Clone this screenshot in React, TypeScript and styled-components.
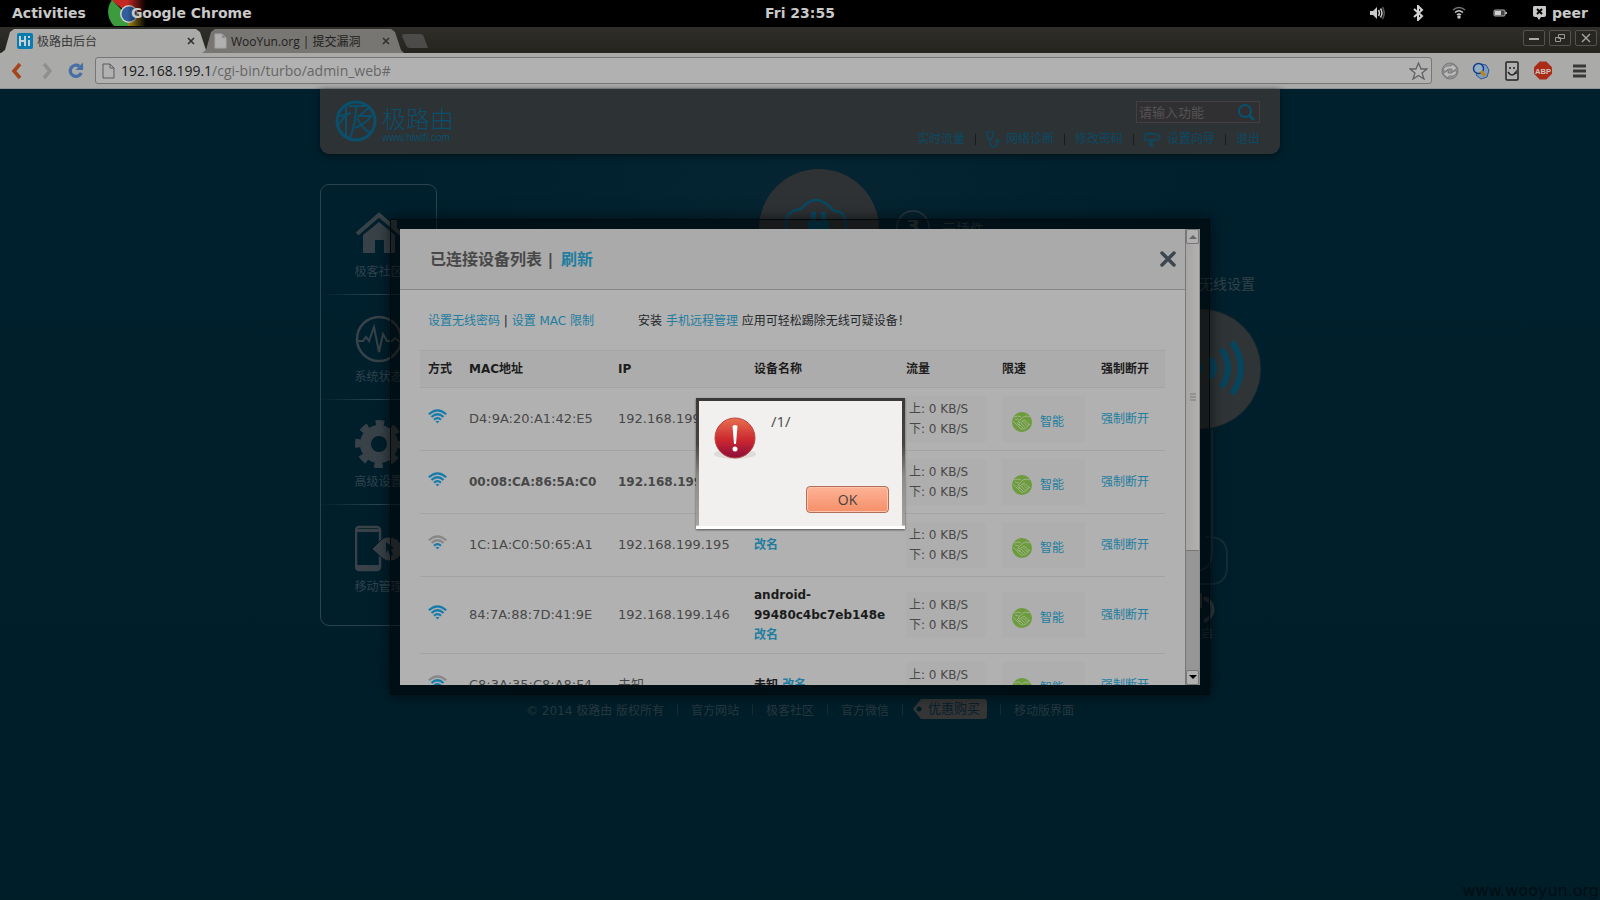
import React from "react";
import styled, { createGlobalStyle } from "styled-components";

const Global = createGlobalStyle`
  *{box-sizing:border-box}
  body{margin:0;background:#001e28;font-family:"DejaVu Sans","Noto Sans CJK SC",sans-serif;font-size:12px;color:#24272a}
  button,input{font-family:inherit;font-size:inherit}
  button{cursor:pointer}
  a{text-decoration:none}
`;
const Screen = styled.div`min-height:100vh;display:flex;flex-direction:column;overflow:hidden;`;
const Panel = styled.header`
  height:27px;background:#000;color:#c9c9c8;display:flex;align-items:center;justify-content:space-between;
  font:bold 14px/26px "DejaVu Sans",sans-serif;padding:0 12px 2px;
`;
const PanelSide = styled.div<{ $end?: boolean }>`flex:1;display:flex;align-items:center;justify-content:${p => (p.$end ? "flex-end" : "flex-start")};`;
const PanelButton = styled.button`border:0;background:none;color:inherit;padding:0;font-weight:bold;font-size:14px;line-height:26px;`;
const AppMenu = styled(PanelButton)`display:flex;margin-left:22px;& span{margin-left:-15px;z-index:1}`;
const StatusIcons = styled.div`display:flex;align-items:center;gap:26px;margin-right:25px;`;
const Peer = styled(PanelButton)`display:flex;align-items:center;gap:5px;`;

const TabStrip = styled.div`height:26px;background:linear-gradient(#302e29,#26241f);display:flex;align-items:flex-end;justify-content:space-between;padding-right:3px;`;
const Tabs = styled.div`display:flex;align-items:flex-end;`;
const TabShape = styled.div<{ $active?: boolean }>`
  width:${p => (p.$active ? 208 : 202)}px;height:24px;margin-left:${p => (p.$active ? 1 : -7)}px;
  padding:0 10px 0 ${p => (p.$active ? 16 : 12)}px;display:flex;align-items:center;
  background:${p => (p.$active ? "#aaaaa8" : "#787673")};
  clip-path:polygon(0 100%,4px 88%,9px 12%,13px 0,calc(100% - 13px) 0,calc(100% - 9px) 12%,calc(100% - 3px) 88%,100% 100%);
  color:${p => (p.$active ? "#393939" : "#202020")};
  & span{flex:1;margin-left:4px;white-space:nowrap;font-family:"Open Sans","Noto Sans CJK SC",sans-serif}
`;
const TabClose = styled.button`border:0;background:none;padding:0;width:12px;height:12px;margin-right:2px;display:flex;align-items:center;justify-content:center;color:#30302f;`;
const NewTab = styled.button`border:0;background:none;width:26px;height:14px;margin:0 0 5px -2px;padding:0;display:flex;`;
const WinButtons = styled.div`display:flex;gap:4px;align-self:flex-start;padding-top:3px;`;
const WinButton = styled.button`width:22px;height:16px;border:1px solid #55534e;border-radius:2px;background:#282621;color:#aaa;padding:0;display:flex;align-items:center;justify-content:center;`;
const Toolbar = styled.div`height:36px;background:#aaaaa8;border-bottom:1px solid #8e9394;display:flex;align-items:center;padding:0 12px 0 8px;`;
const NavButton = styled.button`border:0;background:none;padding:0;width:16px;height:20px;display:flex;align-items:center;justify-content:center;margin-right:14px;`;
const AddressBox = styled.div`flex:1;height:27px;border:1px solid #767674;border-radius:3px;background:#b1b1b1;display:flex;align-items:center;padding:0 3px 0 6px;margin-left:-3px;gap:6px;`;
const Address = styled.div`flex:1;font:14px/24px "Open Sans",sans-serif;color:#666;& b{font-weight:400;color:#1c1c1c}`;
const Extensions = styled.div`display:flex;align-items:center;gap:13px;margin-left:9px;& button{margin:0;width:18px}& button:last-child{margin-left:5px}`;

const Page = styled.main`flex:1;position:relative;background:radial-gradient(ellipse 420px 200px at 50% 110px,#062431,#00202e00),linear-gradient(#00202e,#001e28);`;
const Site = styled.div`max-width:960px;margin:0 auto;`;
const SiteHeader = styled.header`
  height:65px;background:#2d3235;border-radius:0 0 9px 9px;box-shadow:0 2px 6px #00141c;
  display:flex;justify-content:space-between;padding:11px 20px 0 15px;
`;
const Brand = styled.a`display:flex;gap:5px;color:#0a4f6b;height:42px;`;
const BrandText = styled.div`display:flex;flex-direction:column;font:24px/28px "Noto Sans CJK SC",sans-serif;font-weight:300;padding-top:4px;& small{font:10px/12px "Liberation Sans",sans-serif}`;
const HeaderRight = styled.div`display:flex;flex-direction:column;align-items:flex-end;gap:8px;`;
const SearchBox = styled.label`
  width:124px;height:22px;margin-top:1px;border:1px solid #453e3e;background:#302f31;display:flex;align-items:center;padding:0 3px 0 2px;
  & input{width:98px;border:0;background:none;padding:0;outline:0;font-size:13px}
  & input::placeholder{color:#565353;opacity:1}
`;
const Links = styled.nav`display:flex;align-items:center;gap:10px;height:16px;line-height:16px;& i{width:1px;height:11px;background:#171c1f}`;
const HeadLink = styled.a`color:#0b4a63;display:flex;align-items:center;gap:6px;white-space:nowrap;`;
const Body = styled.div`display:flex;justify-content:space-between;align-items:flex-start;padding-top:30px;`;
const Sidebar = styled.nav`width:117px;height:442px;border:1px solid #2b434e;border-radius:9px;padding-top:5px;`;
const SideItem = styled.a`
  display:flex;flex-direction:column;align-items:center;height:105px;padding-top:19px;gap:4px;color:#31434d;
  border-bottom:1px solid;border-image:linear-gradient(90deg,transparent,#2b4652 50%,transparent) 1;
  &:last-child{border:0}
  & span{line-height:18px}
`;
const SideIcon = styled.svg`width:48px;height:50px;`;
const Map = styled.svg`width:520px;height:490px;margin:-18px 14px 0 0;`;
const Footer = styled.footer`
  display:flex;justify-content:center;align-items:center;margin-top:42px;height:22px;color:#29383f;gap:13px;white-space:nowrap;
  & a{color:inherit}& i{width:1px;height:11px;background:#1a2b33}
`;
const Buy = styled.a`
  background:radial-gradient(circle at 6px 10px,#001e28 2px,#363637 3px);&&{color:#08212b}
  font-size:13px;line-height:20px;height:20px;padding:0 7px 0 15px;border-radius:3px;margin-left:-3px;clip-path:polygon(8px 0,100% 0,100% 100%,8px 100%,0 50%);
`;
const Watermark = styled.div`position:absolute;right:1px;bottom:0;font:16px/18px "DejaVu Sans",sans-serif;color:#000d12;`;

const ModalFrame = styled.section`
  position:absolute;top:130px;left:50%;width:820px;max-width:100%;height:476px;margin-left:-410px;
  border:1px solid #000a0f;background:#00000080;padding:9px;box-shadow:0 0 14px #0009;
`;
const Modal = styled.div`height:100%;background:#b1b1b1;display:flex;overflow:hidden;border-right:1px solid #8c8c8c;`;
const ModalMain = styled.div`flex:1;overflow:hidden;`;
const ModalHead = styled.header`
  height:61px;background:#aaa;border-bottom:1px solid #858585;display:flex;justify-content:space-between;align-items:center;padding:1px 8px 0 30px;
  & h2{margin:0;font-size:16px;line-height:24px;color:#484848}& a{color:#217d9f;margin-left:2px}
`;
const CloseButton = styled.button`border:0;background:none;width:18px;height:20px;padding:0;color:#3b474d;`;
const Notes = styled.div`display:flex;gap:44px;padding:20px 28px 0;line-height:22px;height:60px;& a{color:#217d9f}`;
const Table = styled.table`
  width:calc(100% - 40px);margin:0 20px;border-collapse:collapse;table-layout:fixed;
  th{background:#acacac;text-align:left;height:37px;padding:0 0 0 8px;border-top:1px solid #a4a4a4;color:#1c1c1c;line-height:18px}
  td{padding:0 0 0 8px;color:#484848;line-height:20px}
  tr{border-bottom:1px solid #a4a4a4}
  a{color:#217d9f}
`;
const Row = styled.tr<{ $tall?: boolean }>`height:${p => (p.$tall ? 77 : 63)}px;`;
const Signal = styled.td`&& svg{display:block;margin-bottom:6px}`;
const Id = styled.td<{ $mine?: boolean }>`font-weight:${p => (p.$mine ? "bold" : "normal")};font-size:${p => (p.$mine ? 12 : 13)}px;`;
const Name = styled.td`&&{font-weight:bold;color:#1b1b1b}`;
const Speed = styled.div`width:80px;height:46px;background:#aeaeae;padding:3px 0 3px 3px;white-space:nowrap;`;
const Limit = styled.div`width:83px;height:46px;background:#aeaeae;display:flex;align-items:center;padding:6px 0 0 10px;gap:8px;`;
const Scroll = styled.div`width:14px;border-left:1px solid #777;background:#979696;display:flex;flex-direction:column;`;
const ScrollButton = styled.button`height:15px;padding:0;border:1px solid #777;border-radius:2px;background:#b0b0b0;display:flex;align-items:center;justify-content:center;`;
const Thumb = styled.div`flex:309;background:linear-gradient(90deg,#a8a6a4,#b2b0ae);border-bottom:1px solid #777;display:flex;align-items:center;justify-content:center;`;
const Track = styled.div`flex:120;`;

const Alert = styled.div`
  position:absolute;left:50%;top:309px;width:209px;height:131px;margin-left:-104px;padding:3px;
  background:linear-gradient(#3a3938,#454443 35%,#8d8b88 60%,#a5a29f 97%,#fff 98%);box-shadow:0 1px 2px #0008;
`;
const AlertBody = styled.div`height:100%;background:#f1f0ee;display:grid;grid-template-columns:44px 1fr;padding:15px 13px 13px 14px;column-gap:14px;font:14px/20px "Open Sans",sans-serif;color:#4a4a4a;& p{margin:-5px 0 0;font-size:15px}`;
const Ok = styled.button`grid-column:2;justify-self:end;align-self:end;width:83px;height:27px;border:1px solid #b16f58;border-radius:4px;background:linear-gradient(#feb297,#f49068);box-shadow:inset 0 0 0 1px #ffc2aa;color:#44423f;padding:0;`;

const X = () => <svg width="8" height="8" viewBox="0 0 8 8"><path d="M1 1l6 6M7 1l-6 6" stroke="currentColor" strokeWidth="1.6" /></svg>;
const PageIcon = ({ fill = "none" }: { fill?: string }) => (
  <svg width="13" height="16" viewBox="0 0 13 16"><path d="M1 1h7l4 4v10H1zM8 1v4h4" fill={fill} stroke={fill === "none" ? "#5a5a5a" : "#a5a5a5"} /></svg>
);
const Wifi = ({ bars = 4 }: { bars?: number }) => {
  const tone = (n: number) => (bars >= n ? "#147bab" : "#878787");
  return (
    <svg width="19" height="15" viewBox="0 0 19 15" fill="none" strokeWidth="2.200">
      <path d="M.8 5.300Q9.500-2.500 18.200 5.300" stroke={tone(4)} /><path d="M3.500 8Q9.500 2.500 15.500 8" stroke={tone(3)} />
      <path d="M6 10.800Q9.500 7.500 13 10.800" stroke={tone(2)} /><path d="M7.500 12h4l-2 2.500z" fill="#147bab" />
    </svg>
  );
};
const Hands = () => (
  <svg width="20" height="20" viewBox="0 0 20 20"><circle cx="10" cy="10" r="10" fill="#6c9c3b" />
    <g fill="none" stroke="#a3b391" strokeWidth=".9"><path d="M2 5l4-1 3 1M18 5l-4-1-3 1-5 5 2 1 4-3 6 5M1 9l3 3 5 5q2 1 3-1M3 7l4 1M9 11l4 4M11 9.500l4.500 4.500M7 12l4 4M5 11l3 3M12 17l3-2 2-3" /></g></svg>
);

type Device = { mac: string; ip: string; name?: string; mine?: boolean; bars?: number; tall?: boolean };
const devices: Device[] = [
  { mac: "D4:9A:20:A1:42:E5", ip: "192.168.199" },
  { mac: "00:08:CA:86:5A:C0", ip: "192.168.199", mine: true },
  { mac: "1C:1A:C0:50:65:A1", ip: "192.168.199.195", bars: 2 },
  { mac: "84:7A:88:7D:41:9E", ip: "192.168.199.146", name: "android-99480c4bc7eb148e", tall: true },
  { mac: "C8:3A:35:C8:A8:F4", ip: "未知", name: "未知", bars: 3 },
];
const columns: [string, number][] = [["方式", 41], ["MAC地址", 149], ["IP", 136], ["设备名称", 152], ["流量", 96], ["限速", 99], ["强制断开", 72]];

const SideIcons = [
  <g><path d="M2 25L24 6l22 19" fill="none" stroke="#384248" strokeWidth="4" /><path d="M36 10h6v10l-6-5zM8 26L24 13l16 13v18H29V31H20v13H8z" fill="#384248" /></g>,
  <g fill="none" stroke="#384248" strokeWidth="2.500"><circle cx="24" cy="25" r="22" /><path d="M3 27h5l3-4 3 4 5-14 5 25 4-18 4 7h5l3-3 5 4" strokeWidth="2" /></g>,
  <g fill="none" stroke="#384248"><circle cx="24" cy="25" r="13.500" strokeWidth="11" /><circle cx="24" cy="25" r="21" strokeWidth="6" strokeDasharray="8.500 8" strokeDashoffset="4" /></g>,
  <g><rect x="1" y="3" width="24" height="43" rx="3" fill="none" stroke="#384248" strokeWidth="2.500" /><path d="M1 5h24v3H1zM1 41h24v4H1z" fill="#384248" /><path d="M17 25l10-10c8-5 20 0 20 10s-12 16-20 9z" fill="#384248" stroke="#001e2b" /><path d="M31 18l8 6-3 1 2 6-3 1-2-6-2 3z" fill="#001e2b" /></g>,
];

export default function App() {
  return (
    <Screen>
      <Global />
      <Panel>
        <PanelSide>
          <PanelButton>Activities</PanelButton>
          <AppMenu>
            <svg width="38" height="26" viewBox="0 0 38 26">
              <defs><linearGradient id="fade"><stop offset="0.5" stopColor="#000" stopOpacity="0" /><stop offset="1" stopColor="#000" /></linearGradient></defs>
              <path d="M3 0h35v13H20z" fill="#c52822" /><path d="M4 0a20 20 0 0 0 2 26h15l-3-12z" fill="#3b9b3d" /><path d="M20 13h18v13H20z" fill="#ab8a13" />
              <circle cx="21" cy="14" r="9" fill="#d0d0d0" /><circle cx="21" cy="14" r="7.500" fill="#315f9e" /><path d="M0 0h38v26H0z" fill="url(#fade)" />
            </svg>
            <span>Google Chrome</span>
          </AppMenu>
        </PanelSide>
        <time>Fri 23:55</time>
        <PanelSide $end>
          <StatusIcons>
            <svg width="16" height="14" viewBox="0 0 16 14" fill="none" stroke="#c9c9c8" strokeWidth="1.500"><path d="M1 5h3l4-4v12L4 9H1z" fill="#c9c9c8" stroke="none" /><path d="M9.500 4q2 3 0 6M11.500 2.500q3 4.500 0 9" /><path d="M13.500 1q3.500 6 0 12" stroke="#555" /></svg>
            <svg width="14" height="16" viewBox="0 0 14 16"><path d="M3 4l8 7-4 4V1l4 4-8 7" fill="none" stroke="#d5d5d5" strokeWidth="2" /></svg>
            <svg width="16" height="13" viewBox="0 0 16 13" fill="none" stroke="#c9c9c8" strokeWidth="1.500"><path d="M2 4q6-5 12 0" stroke="#777" /><path d="M4 6.500q4-3.500 8 0M6 9q2-2 4 0" /><circle cx="8" cy="11" r="1" fill="#c9c9c8" /></svg>
            <svg width="14" height="8" viewBox="0 0 14 8"><rect x="1" y="1" width="11" height="6" rx="1" fill="#444" stroke="#aaa" /><path d="M2 2h6v4H2z" fill="#d0d0d0" /><path d="M12 3h2v2h-2z" fill="#aaa" /></svg>
          </StatusIcons>
          <Peer><svg width="15" height="14" viewBox="0 0 15 14"><path d="M2 0h11q1 0 1 1v8q0 2-2 2H9l-2 3-2-3H3Q1 11 1 9V1z" fill="#c9c9c8" /><path d="M5 3l5 5M10 3L5 8" stroke="#000" strokeWidth="2" /></svg>peer</Peer>
        </PanelSide>
      </Panel>

      <TabStrip>
        <Tabs>
          <TabShape $active>
            <svg width="16" height="16" viewBox="0 0 16 16"><rect width="16" height="16" rx="2" fill="#087baf" /><path d="M3 3v10M8 3v10M3 8h5M12 7v6M12 3v2" stroke="#c5d0d5" strokeWidth="2" /></svg>
            <span>极路由后台</span><TabClose aria-label="关闭标签页"><X /></TabClose>
          </TabShape>
          <TabShape><PageIcon fill="#b0b0b0" /><span>WooYun.org | 提交漏洞</span><TabClose aria-label="关闭标签页"><X /></TabClose></TabShape>
          <NewTab aria-label="新标签页"><svg width="26" height="14" viewBox="0 0 26 14"><path d="M2 0h16q3 0 4 3l4 11H8q-3 0-4-3L0 2q0-2 2-2z" fill="#4c4b49" /></svg></NewTab>
        </Tabs>
        <WinButtons>
          <WinButton aria-label="最小化"><svg width="10" height="10"><path d="M0 6h10" stroke="#aaa" strokeWidth="2" /></svg></WinButton>
          <WinButton aria-label="还原"><svg width="10" height="10" fill="none" stroke="#999"><path d="M3.500 1.500h6v4h-6zM.5 4.500h5v4h-5z" /></svg></WinButton>
          <WinButton aria-label="关闭"><svg width="10" height="10" viewBox="0 0 10 10"><path d="M1 1l8 8M9 1l-8 8" stroke="#a5a5a5" strokeWidth="1.400" /></svg></WinButton>
        </WinButtons>
      </TabStrip>
      <Toolbar>
        <NavButton aria-label="后退"><svg width="12" height="18" viewBox="0 0 12 18"><path d="M10 2L4 9l6 7" fill="none" stroke="#a5431a" strokeWidth="3.500" /></svg></NavButton>
        <NavButton aria-label="前进"><svg width="12" height="18" viewBox="0 0 12 18"><path d="M4 2l6 7-6 7" fill="none" stroke="#8f8f8e" strokeWidth="3.500" /></svg></NavButton>
        <NavButton aria-label="刷新"><svg width="17" height="17" viewBox="0 0 17 17"><path d="M14 11A6 6 0 1 1 12 4" fill="none" stroke="#4670a5" strokeWidth="3.500" /><path d="M16 0v8H8z" fill="#4670a5" /></svg></NavButton>
        <AddressBox>
          <PageIcon />
          <Address><b>192.168.199.1</b>/cgi-bin/turbo/admin_web#</Address>
          <svg width="19" height="18" viewBox="0 0 19 18"><path d="M9.500 1l2.500 6h6l-5 4 2 6-5.500-3.500L4 17l2-6-5-4h6z" fill="#b8b8b8" stroke="#626262" strokeWidth="1.300" /></svg>
        </AddressBox>
        <Extensions>
          <NavButton aria-label="同步"><svg width="18" height="18" viewBox="0 0 18 18"><circle cx="9" cy="9" r="8" fill="#949494" stroke="#7b7b7b" /><path d="M2 9q1-6 8-5l1-2 5 4-5 4V7Q6 6 5 9zM16 9q-1 6-8 5l-1 2-5-4 5-4v3q5 1 6-2z" fill="#bbb" stroke="#6d6d6d" strokeWidth=".7" /></svg></NavButton>
          <NavButton aria-label="搜索工具"><svg width="18" height="18" viewBox="0 0 18 18"><path d="M9 2l5 1 3 5-2 7-6 2-5-4z" fill="#7d9dc0" stroke="#2a569b" /><circle cx="6.500" cy="6.500" r="5" fill="#91aec5" stroke="#173d87" strokeWidth="1.500" /><path d="M9 9l4 5" stroke="#bd8613" strokeWidth="3" /></svg></NavButton>
          <NavButton aria-label="笑脸"><svg width="14" height="20" viewBox="0 0 14 20"><rect x="1" y="1" width="12" height="18" rx="1" fill="#b0b0b0" stroke="#222" strokeWidth="1.500" /><path d="M5 6v2M9 6v2M3 11q4 6 8 0v2" fill="none" stroke="#222" strokeWidth="1.500" /></svg></NavButton>
          <NavButton aria-label="ABP"><svg width="19" height="19" viewBox="0 0 19 19"><path d="M6 0h7l6 6v7l-6 6H6l-6-6V6z" fill="#a92b18" /><text x="9.500" y="13" textAnchor="middle" fontFamily="Liberation Sans" fontSize="8" fontWeight="bold" fill="#d0c5c2">ABP</text></svg></NavButton>
          <NavButton aria-label="菜单"><svg width="13" height="14"><path d="M0 2h13M0 7h13M0 12h13" stroke="#383838" strokeWidth="3" /></svg></NavButton>
        </Extensions>
      </Toolbar>

      <Page>
        <Site>
          <SiteHeader>
            <Brand href="#" aria-label="极路由">
              <svg width="42" height="42" viewBox="0 0 42 42" fill="none" stroke="currentColor"><circle cx="21" cy="21" r="19" strokeWidth="3" /><path d="M2 17l14-4M11 6v31M11 15L3 25M14 6h20M21 6q0 17-6 32M35 7L24 16h12q-4 7-16 12M22 18q6 12 14 15" strokeWidth="2" /></svg>
              <BrandText>极路由<small>www.hiwifi.com</small></BrandText>
            </Brand>
            <HeaderRight>
              <SearchBox><input aria-label="请输入功能" placeholder="请输入功能" /><svg width="18" height="18" viewBox="0 0 18 18" fill="none" stroke="#09506c" strokeWidth="2.200"><circle cx="8" cy="8" r="6" /><path d="M12 12l5 5" strokeWidth="3" /></svg></SearchBox>
              <Links>
                <HeadLink href="#">实时流量</HeadLink><i />
                <HeadLink href="#"><svg width="14" height="17" viewBox="0 0 14 17" fill="none" stroke="currentColor" strokeWidth="1.500"><path d="M3 1H1v4q3 7 6 0V1H5M4 9v3q1 4 4 4t3-5" /><circle cx="11.500" cy="10" r="1.200" /></svg>网络诊断</HeadLink><i />
                <HeadLink href="#">修改密码</HeadLink><i />
                <HeadLink href="#"><svg width="17" height="17" viewBox="0 0 17 17" fill="none" stroke="currentColor" strokeWidth="1.500"><path d="M1 3h12l3 3-3 3H1zM6 1v2M6 9v7M8 9v7" /></svg>设置向导</HeadLink><i />
                <HeadLink href="#">退出</HeadLink>
              </Links>
            </HeaderRight>
          </SiteHeader>
          <Body>
            <Sidebar>
              {["极客社区", "系统状态", "高级设置", "移动管理"].map((label, i) => (
                <SideItem href="#" key={label}><SideIcon viewBox="0 0 48 50">{SideIcons[i]}</SideIcon><span>{label}</span></SideItem>
              ))}
            </Sidebar>
            <Map viewBox="0 0 520 490" role="img" aria-label="网络拓扑">
              <circle cx="73" cy="63" r="60" fill="#2e3234" />
              <path d="M42 68q-8-22 13-25 15-19 33 2 15 0 11 23" fill="none" stroke="#074a65" strokeWidth="2.500" /><path d="M65 46h5v9h5v-9h5v9h3v14H62V55h3z" fill="#074a65" />
              <circle cx="167" cy="61" r="16" fill="none" stroke="#2b3b42" strokeWidth="1.500" /><text x="160" y="67" fontSize="20" fontWeight="bold" fill="#35434a">3</text><text x="196" y="68" fontSize="14" fill="#35454d">云插件</text>
              <text x="453" y="123" fontSize="14" fill="#334148">无线设置</text>
              <circle cx="455" cy="203" r="60" fill="#2f3436" stroke="#15252c" />
              <g fill="none" stroke="#07445d" strokeWidth="6"><path d="M464 192q8 10 0 20M475 183q14 19 0 38M486 176q18 26 0 52" /><circle cx="450" cy="202" r="4" fill="#07445d" /></g>
              <path d="M466 264v120q0 20-14 20M460 371h3q18 0 18 18v12q0 17-17 17h-10" fill="none" stroke="#132c35" strokeWidth="2" />
              <path d="M458 455a12 12 0 0 0 0-23M454 427v15" fill="none" stroke="#30393e" strokeWidth="4" /><text x="443" y="472" fontSize="12" fill="#25363e">重启</text>
            </Map>
          </Body>
          <Footer>
            <span>© 2014 极路由 版权所有</span><i /><a href="#">官方网站</a><i /><a href="#">极客社区</a><i /><a href="#">官方微信</a><i /><Buy href="#">优惠购买</Buy><i /><a href="#">移动版界面</a>
          </Footer>
        </Site>
        <Watermark>www.wooyun.org</Watermark>

        <ModalFrame role="dialog" aria-label="已连接设备列表">
          <Modal>
            <ModalMain>
              <ModalHead><h2>已连接设备列表 | <a href="#">刷新</a></h2><CloseButton aria-label="关闭"><svg width="18" height="18" viewBox="0 0 18 18"><path d="M3 3l12 12M15 3L3 15" stroke="currentColor" strokeWidth="3.500" strokeLinecap="round" /></svg></CloseButton></ModalHead>
              <Notes><span><a href="#">设置无线密码</a> | <a href="#">设置 MAC 限制</a></span><span>安装 <a href="#">手机远程管理</a> 应用可轻松踢除无线可疑设备！</span></Notes>
              <Table>
                <colgroup>{columns.map(([t, w]) => <col key={t} width={w} />)}</colgroup>
                <thead><tr>{columns.map(([t]) => <th key={t}>{t}</th>)}</tr></thead>
                <tbody>
                  {devices.map(d => (
                    <Row key={d.mac} $tall={d.tall}>
                      <Signal><Wifi bars={d.bars} /></Signal><Id $mine={d.mine}>{d.mac}</Id><Id $mine={d.mine}>{d.ip}</Id>
                      <Name>{d.name} <a href="#">改名</a></Name>
                      <td><Speed>上: 0 KB/S<br />下: 0 KB/S</Speed></td>
                      <td><Limit><Hands /><a href="#">智能</a></Limit></td>
                      <td><a href="#">强制断开</a></td>
                    </Row>
                  ))}
                </tbody>
              </Table>
            </ModalMain>
            <Scroll>
              <ScrollButton aria-label="向上滚动"><svg width="8" height="5"><path d="M0 5l4-4 4 4z" fill="#666" /></svg></ScrollButton>
              <Thumb><svg width="6" height="8"><path d="M0 1h6M0 4h6M0 7h6" stroke="#777" /></svg></Thumb>
              <Track />
              <ScrollButton aria-label="向下滚动"><svg width="8" height="5"><path d="M0 0l4 4 4-4z" fill="#000" /></svg></ScrollButton>
            </Scroll>
          </Modal>
        </ModalFrame>

        <Alert role="alertdialog" aria-label="提示">
          <AlertBody>
            <svg width="44" height="46" viewBox="0 0 44 46">
              <defs><linearGradient id="red" x2="0" y2="1"><stop stopColor="#e8704f" /><stop offset=".55" stopColor="#cb2730" /><stop offset="1" stopColor="#8d0d3c" /></linearGradient></defs>
              <ellipse cx="22" cy="38" rx="21" ry="5" fill="#dddcda" /><circle cx="22" cy="22" r="20" fill="url(#red)" stroke="#b9473f" /><path d="M19.500 10q2.500-2 5 0l-1.500 18h-2z" fill="#fff" /><circle cx="22" cy="33" r="2.500" fill="#fff" />
            </svg>
            <p>/1/</p>
            <Ok>OK</Ok>
          </AlertBody>
        </Alert>
      </Page>
    </Screen>
  );
}
